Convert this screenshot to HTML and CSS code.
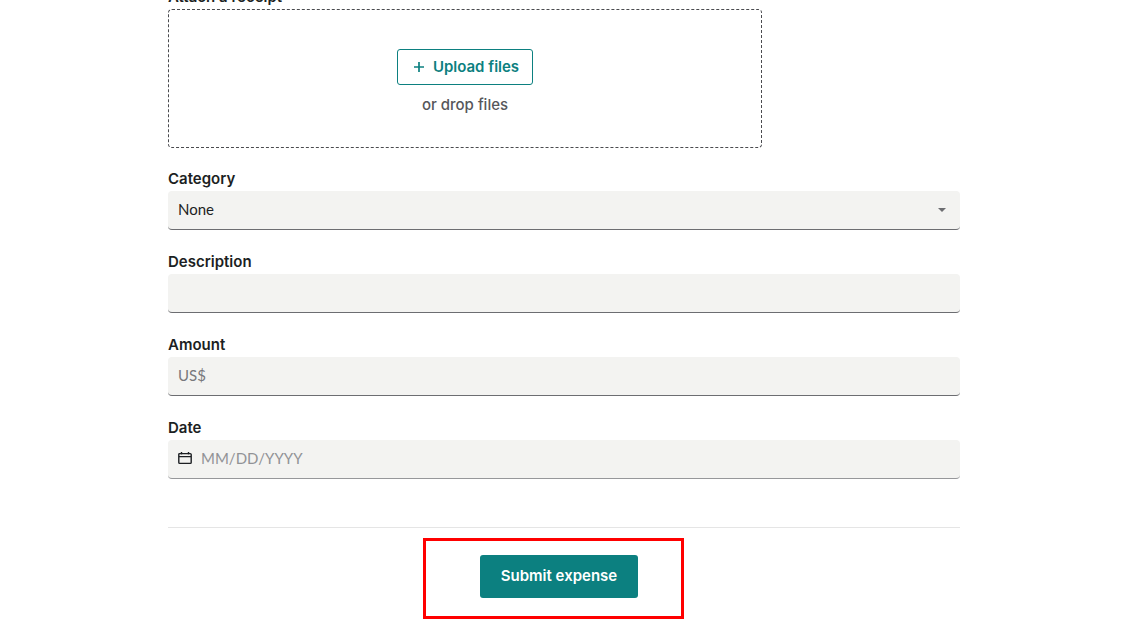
FILE: index.html
```html
<!DOCTYPE html>
<html lang="en">
<head>
<meta charset="utf-8">
<title>Submit expense</title>
<link rel="stylesheet" href="styles.css">
</head>
<body>
<form class="expense-form">
  <section class="receipt">
    <h2 class="label">Attach a receipt</h2>
    <div class="dropzone">
      <button type="button" class="upload">
        <svg class="plus" viewBox="0 0 12 12" aria-hidden="true"><path d="M6 1v10M1 6h10"/></svg>
        <span>Upload files</span>
      </button>
      <span class="drop-hint">or drop files</span>
    </div>
  </section>
  <div class="field">
    <label class="label" for="category">Category</label>
    <div class="control">
      <select id="category" class="input"><option>None</option></select>
      <svg class="caret" viewBox="0 0 8 4" aria-hidden="true"><path d="M0 0h8L4 4z"/></svg>
    </div>
  </div>
  <div class="field">
    <label class="label" for="description">Description</label>
    <div class="control"><input id="description" class="input" type="text"></div>
  </div>
  <div class="field">
    <label class="label" for="amount">Amount</label>
    <div class="control"><input id="amount" class="input amount" type="text" placeholder="US$"></div>
  </div>
  <div class="field">
    <label class="label" for="date">Date</label>
    <div class="control control-date">
      <svg class="calendar" viewBox="0 0 14 14" aria-hidden="true"><path d="M1.7 2.6h10.6q.9 0 .9.9v8q0 .9-.9.9H1.7q-.9 0-.9-.9v-8q0-.9.9-.9zM1 5.6h12M3.5 1v2.5M10.5 1v2.5"/></svg>
      <input id="date" class="input date" type="text" placeholder="MM/DD/YYYY">
    </div>
  </div>
  <footer class="actions">
    <div class="submit-wrap">
      <button type="submit" class="submit">Submit expense</button>
      <span class="highlight"></span>
    </div>
  </footer>
</form>
</body>
</html>
```
FILE: styles.css
```css
* { box-sizing: border-box; }
html { overflow: hidden; }
body {
  margin: 0;
  padding: 0 172px 0 168px;
  background: #fff;
  color: #1c1f23;
  font: 400 15px/24px Lato, sans-serif;
}
.expense-form {
  display: flex;
  flex-direction: column;
  gap: 20px;
  margin-top: -15px;
}
.receipt { margin-bottom: -1px; }
.label {
  display: block;
  margin: 0;
  font-size: 15px;
  font-weight: 600;
  line-height: 24px;
  font-family: Inter, sans-serif;
}
.dropzone {
  display: flex;
  flex-direction: column;
  align-items: center;
  gap: 8px;
  width: 75%;
  padding: 39px 0 30px;
  border: 1px dashed #4a4b4f;
  border-radius: 4px;
}
.upload {
  display: flex;
  align-items: center;
  gap: 8px;
  height: 36px;
  padding: 0 13px 0 15px;
  border: 1px solid #0c8080;
  border-radius: 3px;
  background: #fff;
  color: #0c8080;
  font: 600 15px/24px Inter, sans-serif;
}
.plus { width: 12px; height: 12px; fill: none; stroke: currentColor; stroke-width: 1.7; }
.drop-hint { color: #56575b; font-weight: 500; font-family: Inter, sans-serif; }
.control {
  position: relative;
  display: flex;
  align-items: center;
  height: 39px;
  border-bottom: 1px solid #6c6d71;
  border-radius: 4px;
  background: #f3f3f1;
}
.control-date { gap: 9px; padding-left: 10px; border-color: #96979a; }
.input {
  flex: 1;
  min-width: 0;
  height: 100%;
  padding: 0 10px 3px;
  border: 0;
  outline: 0;
  appearance: none;
  background: transparent;
  color: inherit;
  font: inherit;
}
.input::placeholder { color: #919296; opacity: 1; }
.amount::placeholder { color: #77787c; }
.date { padding-left: 0; }
.caret { position: absolute; right: 14px; width: 8px; height: 4px; fill: #6c6d71; pointer-events: none; }
.calendar { width: 14px; height: 14px; margin-bottom: 2px; fill: none; stroke: #1c1f23; stroke-width: 1.4; }
.actions {
  display: flex;
  justify-content: center;
  margin-top: 28px;
  padding: 27px 10px 24px 0;
  border-top: 1px solid #e5e5e5;
}
.submit-wrap { position: relative; }
.submit {
  height: 43px;
  padding: 0 21px 2px;
  border: 0;
  border-radius: 3px;
  background: #0c8080;
  color: #fff;
  font: 600 15px/24px Inter, sans-serif;
}
.highlight {
  position: absolute;
  inset: -17px -46px -21px -57px;
  border: 3px solid #f00;
  pointer-events: none;
}
```
